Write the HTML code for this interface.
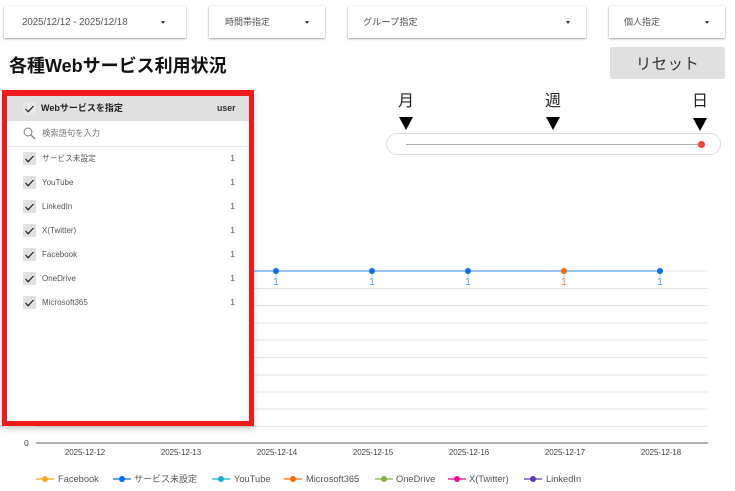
<!DOCTYPE html>
<html><head><meta charset="utf-8">
<style>
html,body{margin:0;padding:0;background:#fff;}
body{width:735px;height:491px;overflow:hidden;position:relative;font-family:"Liberation Sans","Noto Sans CJK JP",sans-serif;color:#333;}
.a{position:absolute;white-space:nowrap;}
.card{position:absolute;top:6px;height:32px;background:#fff;box-shadow:0 1px 2px rgba(0,0,0,.35),0 0 2px rgba(0,0,0,.08);}
.card span{position:absolute;top:0;line-height:33px;font-size:9px;color:#555;white-space:nowrap;}
.card i{position:absolute;top:15px;width:0;height:0;border-left:2.5px solid transparent;border-right:2.5px solid transparent;border-top:3px solid #333;}
.tri{position:absolute;width:0;height:0;border-left:7.5px solid transparent;border-right:7.5px solid transparent;border-top:13px solid #000;top:117px;}
.lb{position:absolute;font-size:16px;color:#222;top:91px;line-height:22px;width:30px;text-align:center;}
.cb{position:absolute;left:23px;width:13px;height:13px;background:#e0e0e0;border-radius:1px;}
.nm{position:absolute;left:42px;font-size:8px;color:#555;line-height:12px;margin-top:1px;white-space:nowrap;}
.ct{position:absolute;left:225px;width:10px;text-align:right;font-size:8.5px;color:#555;line-height:12px;}
.xl{position:absolute;top:446px;width:60px;text-align:center;font-size:7.9px;line-height:14px;color:#444;}
.lg{position:absolute;top:472px;font-size:9.3px;line-height:14px;color:#555;white-space:nowrap;}
.v{position:absolute;top:277px;width:10px;text-align:center;font-size:10px;line-height:12px;}
</style></head><body>

<div class="card" style="left:4px;width:182px"><span style="left:18px;font-size:9.7px">2025/12/12 - 2025/12/18</span><i style="left:157px"></i></div>
<div class="card" style="left:209px;width:116px"><span style="left:16px">時間帯指定</span><i style="left:96px"></i></div>
<div class="card" style="left:348px;width:238px"><span style="left:15px;font-size:9.2px">グループ指定</span><i style="left:218px"></i></div>
<div class="card" style="left:609px;width:116px"><span style="left:15px">個人指定</span><i style="left:96px"></i></div>

<div class="a" style="left:9px;top:53px;font-size:18px;font-weight:700;line-height:26px;color:#111">各種Webサービス利用状況</div>

<div class="a" style="left:610px;top:47px;width:115px;height:32px;background:#e0e0e0;border-radius:2px;text-align:center;font-size:15.5px;line-height:35px;color:#333;letter-spacing:.4px">リセット</div>

<div class="lb" style="left:391px">月</div><div class="lb" style="left:538px">週</div><div class="lb" style="left:685px">日</div>
<div class="tri" style="left:399px"></div><div class="tri" style="left:546px"></div><div class="tri" style="left:693px;top:118px"></div>
<div class="a" style="left:386px;top:133px;width:333px;height:20px;border:1px solid #ddd;border-radius:11px;background:#fff"></div>
<div class="a" style="left:406px;top:144px;width:295px;height:1px;background:#b0b0b0"></div>
<div class="a" style="left:698px;top:141px;width:6.5px;height:6.5px;border-radius:50%;background:#f44336"></div>

<svg class="a" style="left:0;top:0" width="735" height="491">
<g stroke="#e6e6e6" stroke-width="1">
<path d="M36 271H708M36 288.5H708M36 305.5H708M36 323H708M36 340H708M36 357.5H708M36 375H708M36 392H708M36 409H708M36 426.5H708"/>
</g>
<path d="M36 443H708" stroke="#666" stroke-width="1"/>
<path d="M36 271H660" stroke="#2f8cf5" stroke-width="1"/>
<g stroke="#ccc" stroke-width="1"><path d="M276 274V278M372 274V278M468 274V278M564 274V278M660 274V278"/></g>
<circle cx="276" cy="271" r="3" fill="#0a6cf0"/>
<circle cx="372" cy="271" r="3" fill="#0a6cf0"/>
<circle cx="468" cy="271" r="3" fill="#0a6cf0"/>
<circle cx="564" cy="271" r="3" fill="#f06c0a"/>
<circle cx="660" cy="271" r="3" fill="#0a6cf0"/>
<g stroke-width="1.2" fill="none">
<path d="M36 479H54" stroke="#f5a623"/><path d="M113 479H131" stroke="#0a6cf0"/><path d="M212 479H230" stroke="#12b0c8"/><path d="M284 479H302" stroke="#f06c0a"/><path d="M375 479H393" stroke="#7cb342"/><path d="M448 479H466" stroke="#f0088c"/><path d="M524 479H542" stroke="#5e35b1"/>
</g>
<circle cx="45" cy="479" r="3" fill="#f5a623"/><circle cx="122" cy="479" r="3" fill="#0a6cf0"/><circle cx="221" cy="479" r="3" fill="#12b0c8"/><circle cx="293" cy="479" r="3" fill="#f06c0a"/><circle cx="384" cy="479" r="3" fill="#7cb342"/><circle cx="457" cy="479" r="3" fill="#f0088c"/><circle cx="533" cy="479" r="3" fill="#5e35b1"/>
</svg>

<div class="v" style="left:271px;color:#4a9af5">1</div>
<div class="v" style="left:367px;color:#4a9af5">1</div>
<div class="v" style="left:463px;color:#4a9af5">1</div>
<div class="v" style="left:559px;color:#d98a4a">1</div>
<div class="v" style="left:655px;color:#4a9af5">1</div>

<div class="a" style="left:24px;top:436px;font-size:8.5px;line-height:14px;color:#444">0</div>
<div class="xl" style="left:55px">2025-12-12</div>
<div class="xl" style="left:151px">2025-12-13</div>
<div class="xl" style="left:247px">2025-12-14</div>
<div class="xl" style="left:343px">2025-12-15</div>
<div class="xl" style="left:439px">2025-12-16</div>
<div class="xl" style="left:535px">2025-12-17</div>
<div class="xl" style="left:631px">2025-12-18</div>

<div class="lg" style="left:58px">Facebook</div>
<div class="lg" style="left:134px;font-size:9px">サービス未設定</div>
<div class="lg" style="left:234px">YouTube</div>
<div class="lg" style="left:306px">Microsoft365</div>
<div class="lg" style="left:396px">OneDrive</div>
<div class="lg" style="left:469px">X(Twitter)</div>
<div class="lg" style="left:546px">LinkedIn</div>

<!-- Panel -->
<div class="a" style="left:2px;top:90px;width:252px;height:336px;background:#fff;box-shadow:0 3px 6px rgba(0,0,0,.2)"></div>
<div class="a" style="left:7px;top:96px;width:242px;height:25px;background:#e0e0e0"></div>
<div class="a" style="left:7px;top:146px;width:242px;height:1px;background:#e6e6e6"></div>
<div class="a" style="left:2px;top:90px;width:242px;height:325px;border:5px solid #ec1c1c;border-top-width:6px;border-bottom-width:5px;box-sizing:content-box"></div>

<div class="cb" style="top:102px;background:#e8e8e8"></div>
<div class="a" style="left:41px;top:102px;font-size:9px;font-weight:700;line-height:13px;color:#222">Webサービスを指定</div>
<div class="a" style="left:217px;top:102px;font-size:8.8px;font-weight:700;line-height:13px;color:#333">user</div>
<svg class="a" style="left:23px;top:127px" width="13" height="13" viewBox="0 0 13 13"><circle cx="5" cy="5" r="3.9" fill="none" stroke="#888" stroke-width="1.1"/><path d="M8 8L12 12" stroke="#888" stroke-width="1.3"/></svg>
<div class="a" style="left:42px;top:127px;font-size:8.3px;line-height:13px;color:#777">検索語句を入力</div>

<div class="cb" style="top:152px"></div><div class="nm" style="top:152px;font-size:7.7px">サービス未設定</div><div class="ct" style="top:152px">1</div>
<div class="cb" style="top:176px"></div><div class="nm" style="top:176px">YouTube</div><div class="ct" style="top:176px">1</div>
<div class="cb" style="top:200px"></div><div class="nm" style="top:200px">LinkedIn</div><div class="ct" style="top:200px">1</div>
<div class="cb" style="top:224px"></div><div class="nm" style="top:224px">X(Twitter)</div><div class="ct" style="top:224px">1</div>
<div class="cb" style="top:248px"></div><div class="nm" style="top:248px">Facebook</div><div class="ct" style="top:248px">1</div>
<div class="cb" style="top:272px"></div><div class="nm" style="top:272px">OneDrive</div><div class="ct" style="top:272px">1</div>
<div class="cb" style="top:296px"></div><div class="nm" style="top:296px">Microsoft365</div><div class="ct" style="top:296px">1</div>
<svg class="a" style="left:23px;top:96px" width="13" height="220"><g fill="none" stroke="#222" stroke-width="1.2"><path d="M2.5 13L5.2 15.7L10.5 10"/><path d="M2.5 63L5.2 65.7L10.5 60"/><path d="M2.5 87L5.2 89.7L10.5 84"/><path d="M2.5 111L5.2 113.7L10.5 108"/><path d="M2.5 135L5.2 137.7L10.5 132"/><path d="M2.5 159L5.2 161.7L10.5 156"/><path d="M2.5 183L5.2 185.7L10.5 180"/><path d="M2.5 207L5.2 209.7L10.5 204"/></g></svg>
</body></html>
